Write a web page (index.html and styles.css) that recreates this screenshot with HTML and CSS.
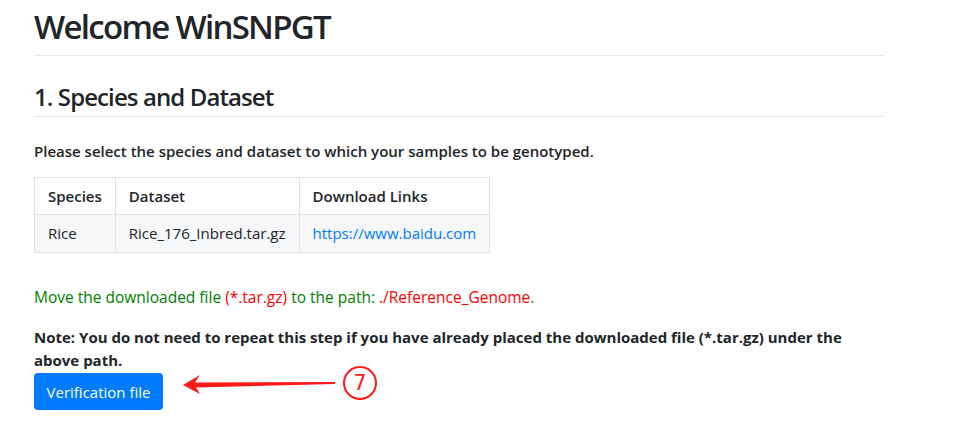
FILE: index.html
```html
<!DOCTYPE html>
<html lang="en">
<head>
<meta charset="utf-8">
<title>Welcome WinSNPGT</title>
<link rel="stylesheet" href="styles.css">
</head>
<body>
<div class="container">
  <h1 class="title">Welcome WinSNPGT</h1>
  <hr class="rule">
  <h3 class="section">1. Species and Dataset</h3>
  <hr class="rule">
  <h6 class="lead-text">Please select the species and dataset to which your samples to be genotyped.</h6>
  <table class="data-table">
    <thead>
      <tr><th>Species</th><th>Dataset</th><th>Download Links</th></tr>
    </thead>
    <tbody>
      <tr><td>Rice</td><td>Rice_176_Inbred.tar.gz</td><td><a href="#" class="link">https://www.baidu.com</a></td></tr>
    </tbody>
  </table>
  <p class="move">Move the downloaded file <span class="red">(*.tar.gz)</span> to the path: <span class="red">./Reference_Genome</span>.</p>
  <p class="note">Note: You do not need to repeat this step if you have already placed the downloaded file (*.tar.gz) under the above path.</p>
  <div class="action">
    <button class="btn">Verification file</button>
    <svg class="annot" width="225" height="40" viewBox="0 0 225 40">
      <polygon points="164,16 24,16.5 29,9 12,19 29,28 25,21.5 164,18" fill="#ff1a1a"/>
      <circle cx="189" cy="17" r="16" fill="none" stroke="#ff1a1a" stroke-width="2"/>
    </svg>
    <span class="annot-num">7</span>
  </div>
</div>
</body>
</html>
```
FILE: styles.css
```css
html, body {
  margin: 0;
  padding: 0;
  background: #fff;
}
body {
  font-family: "Open Sans", "Noto Sans", sans-serif;
  font-size: 16px;
  line-height: 1.5;
  color: #212529;
}
.container {
  width: 850px;
  padding: 0 34px;
}
.title {
  font-size: 33px;
  font-weight: 600;
  letter-spacing: -1.7px;
  line-height: 1.2;
  margin: 7px 0 0;
}
.rule {
  border: 0;
  border-top: 1px solid #e6e6e6;
  margin: 8px 0 0;
}
.section {
  font-size: 24px;
  font-weight: 600;
  letter-spacing: -0.9px;
  line-height: 1.2;
  margin: 27px 0 0;
}
.section + .rule {
  margin-top: 5px;
}
.lead-text {
  font-size: 15px;
  font-weight: 600;
  line-height: 1.5;
  margin: 23px 0 0;
}
.data-table {
  border-collapse: collapse;
  margin-top: 14px;
  font-size: 15px;
}
.data-table th, .data-table td {
  border: 1px solid #dee2e6;
  padding: 6px 13px;
  text-align: left;
  line-height: 24.5px;
}
.data-table th {
  font-weight: 600;
}
.data-table tbody tr {
  background: #f6f7f9;
}
.link {
  color: #007bff;
  text-decoration: none;
}
.move {
  color: #008000;
  font-size: 15.5px;
  margin: 33px 0 0;
}
.red {
  color: #ff0000;
}
.note {
  font-weight: 700;
  font-size: 15px;
  margin: 17px 0 0;
  line-height: 23px;
}
.action {
  position: relative;
  margin-top: 1px;
  height: 40px;
}
.btn {
  background: #007bff;
  color: #fff;
  border: 0;
  border-radius: 4px;
  font-family: inherit;
  font-size: 15px;
  width: 129px;
  height: 37px;
  padding: 0;
}
.annot {
  position: absolute;
  left: 137px;
  top: -7px;
}
.annot-num {
  position: absolute;
  left: 318px;
  top: -5px;
  width: 16px;
  text-align: center;
  color: #ff1a1a;
  font-size: 21px;
  font-family: "DejaVu Sans", sans-serif;
  line-height: 30px;
}
```
